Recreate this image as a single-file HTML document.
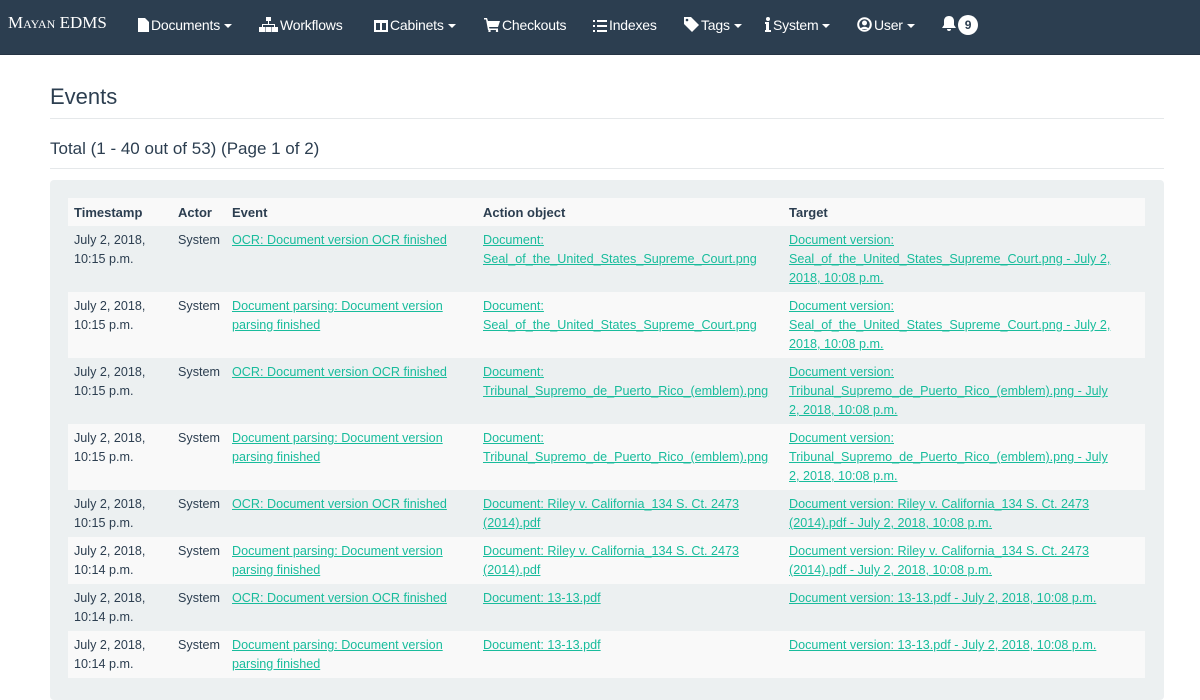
<!DOCTYPE html>
<html><head><meta charset="utf-8"><style>
body{margin:0;font-family:"Liberation Sans",sans-serif;font-size:14px;color:#2c3e50;background:#fff;overflow:hidden;height:669px}
.nav{height:54px;background:#2c3e50;border-bottom:1px solid #253444;color:#fff;position:relative;}
.nav span{position:absolute;top:17px;font-size:14px;white-space:nowrap;letter-spacing:-0.2px}
.brand{font-family:"Liberation Serif",serif;font-size:17px!important;top:13px!important;font-variant:small-caps;letter-spacing:0!important}
.car{display:inline-block;border-left:4px solid transparent;border-right:4px solid transparent;border-top:4px solid #fff;vertical-align:middle;margin-left:4px}
.badge{display:inline-block;background:#fff;color:#2c3e50;border-radius:10px;width:20px;height:20px;text-align:center;line-height:20px;font-size:12px;font-weight:bold}
svg{vertical-align:-2px;margin-right:2px}
h1{position:absolute;left:50px;top:84px;margin:0;font-weight:normal;font-size:22px}
.hr{position:absolute;left:50px;width:1114px;height:1px;background:#e5e8ea}
.total{position:absolute;left:50px;top:139px;font-size:17px}
.well{position:absolute;left:50px;top:180px;width:1114px;height:520px;background:#ecf0f1;border-radius:4px}
table{position:absolute;left:68px;top:198px;width:1077px;border-collapse:collapse;table-layout:fixed;font-size:12.6px;line-height:19px}
th{text-align:left;padding:4px 6px;height:20px;background:#f9f9f9;font-size:13px}
td{vertical-align:top;padding:5px 6px 4px;}
tr.e td{background:#f9f9f9}
a{color:#18bc9c;text-decoration:underline}
</style></head><body>
<div class="nav">
<span class="brand" style="left:8px">Mayan EDMS</span>
<span style="left:138px"><svg width="11" height="14" viewBox="0 0 11 14"><path d="M0 0h7l4 4v10H0z" fill="#fff"/></svg>Documents<i class="car"></i></span>
<span style="left:259px"><svg width="19" height="15" viewBox="0 0 19 15"><path d="M7 0h5v4H7zM9 4h1v3h6v3h-1V8H4v2H3V7h6z M0 10h6v5H0zM6.5 10h6v5h-6zM13 10h6v5h-6z" fill="#fff"/></svg>Workflows</span>
<span style="left:374px"><svg width="14" height="12" viewBox="0 0 14 12"><path d="M0 0h14v12H0zM2 3v7h4V3zM8 3v7h4V3z" fill="#fff" fill-rule="evenodd"/></svg>Cabinets<i class="car"></i></span>
<span style="left:484px"><svg width="16" height="14" viewBox="0 0 16 14"><path d="M0 0h3l1 3h12l-2 6H5l.5 1.5H14V12H4L2 1.5H0z" fill="#fff"/><circle cx="5.5" cy="13" r="1.2" fill="#fff"/><circle cx="13" cy="13" r="1.2" fill="#fff"/></svg>Checkouts</span>
<span style="left:593px"><svg width="14" height="12" viewBox="0 0 14 12"><path d="M0 0h2v2H0zM4 0h10v2H4zM0 5h2v2H0zM4 5h10v2H4zM0 10h2v2H0zM4 10h10v2H4z" fill="#fff"/></svg>Indexes</span>
<span style="left:684px"><svg width="15" height="15" viewBox="0 0 15 15"><path d="M0 0h7l8 8-7 7-8-8z" fill="#fff"/><circle cx="3" cy="3" r="1.3" fill="#2c3e50"/></svg>Tags<i class="car"></i></span>
<span style="left:765px"><svg width="6" height="15" viewBox="0 0 6 15"><circle cx="3" cy="2" r="2" fill="#fff"/><path d="M0 5h4v8h2v2H0v-2h1V7H0z" fill="#fff"/></svg>System<i class="car"></i></span>
<span style="left:857px"><svg width="15" height="15" viewBox="0 0 15 15"><circle cx="7.5" cy="7.5" r="6.3" fill="none" stroke="#fff" stroke-width="2"/><circle cx="7.5" cy="6" r="2.5" fill="#fff"/><path d="M3 12c2-3 7-3 9 0" fill="#fff"/></svg>User<i class="car"></i></span>
<span style="left:942px;top:15px"><svg width="14" height="15" viewBox="0 0 14 15"><path d="M7 0c3 0 5 2 5 5v4l2 3H0l2-3V5c0-3 2-5 5-5zM5 13h4a2 2 0 0 1-4 0z" fill="#fff"/></svg><b class="badge">9</b></span>
</div>
<h1>Events</h1>
<div class="hr" style="top:118px"></div>
<div class="total">Total (1 - 40 out of 53) (Page 1 of 2)</div>
<div class="hr" style="top:168px"></div>
<div class="well"></div>
<table>
<colgroup><col style="width:104px"><col style="width:54px"><col style="width:251px"><col style="width:306px"><col></colgroup>
<tr class="e"><th>Timestamp</th><th>Actor</th><th>Event</th><th>Action object</th><th>Target</th></tr>
<tr><td>July 2, 2018,<br>10:15 p.m.</td><td>System</td><td><a>OCR: Document version OCR finished</a></td><td><a>Document:<br>Seal_of_the_United_States_Supreme_Court.png</a></td><td><a>Document version:<br>Seal_of_the_United_States_Supreme_Court.png - July 2,<br>2018, 10:08 p.m.</a></td></tr>
<tr class="e"><td>July 2, 2018,<br>10:15 p.m.</td><td>System</td><td><a>Document parsing: Document version parsing finished</a></td><td><a>Document:<br>Seal_of_the_United_States_Supreme_Court.png</a></td><td><a>Document version:<br>Seal_of_the_United_States_Supreme_Court.png - July 2,<br>2018, 10:08 p.m.</a></td></tr>
<tr><td>July 2, 2018,<br>10:15 p.m.</td><td>System</td><td><a>OCR: Document version OCR finished</a></td><td><a>Document:<br>Tribunal_Supremo_de_Puerto_Rico_(emblem).png</a></td><td><a>Document version:<br>Tribunal_Supremo_de_Puerto_Rico_(emblem).png - July<br>2, 2018, 10:08 p.m.</a></td></tr>
<tr class="e"><td>July 2, 2018,<br>10:15 p.m.</td><td>System</td><td><a>Document parsing: Document version parsing finished</a></td><td><a>Document:<br>Tribunal_Supremo_de_Puerto_Rico_(emblem).png</a></td><td><a>Document version:<br>Tribunal_Supremo_de_Puerto_Rico_(emblem).png - July<br>2, 2018, 10:08 p.m.</a></td></tr>
<tr><td>July 2, 2018,<br>10:15 p.m.</td><td>System</td><td><a>OCR: Document version OCR finished</a></td><td><a>Document: Riley v. California_134 S. Ct. 2473 (2014).pdf</a></td><td><a>Document version: Riley v. California_134 S. Ct. 2473<br>(2014).pdf - July 2, 2018, 10:08 p.m.</a></td></tr>
<tr class="e"><td>July 2, 2018,<br>10:14 p.m.</td><td>System</td><td><a>Document parsing: Document version parsing finished</a></td><td><a>Document: Riley v. California_134 S. Ct. 2473 (2014).pdf</a></td><td><a>Document version: Riley v. California_134 S. Ct. 2473<br>(2014).pdf - July 2, 2018, 10:08 p.m.</a></td></tr>
<tr><td>July 2, 2018,<br>10:14 p.m.</td><td>System</td><td><a>OCR: Document version OCR finished</a></td><td><a>Document: 13-13.pdf</a></td><td><a>Document version: 13-13.pdf - July 2, 2018, 10:08 p.m.</a></td></tr>
<tr class="e"><td>July 2, 2018,<br>10:14 p.m.</td><td>System</td><td><a>Document parsing: Document version parsing finished</a></td><td><a>Document: 13-13.pdf</a></td><td><a>Document version: 13-13.pdf - July 2, 2018, 10:08 p.m.</a></td></tr>
</table>
</body></html>
